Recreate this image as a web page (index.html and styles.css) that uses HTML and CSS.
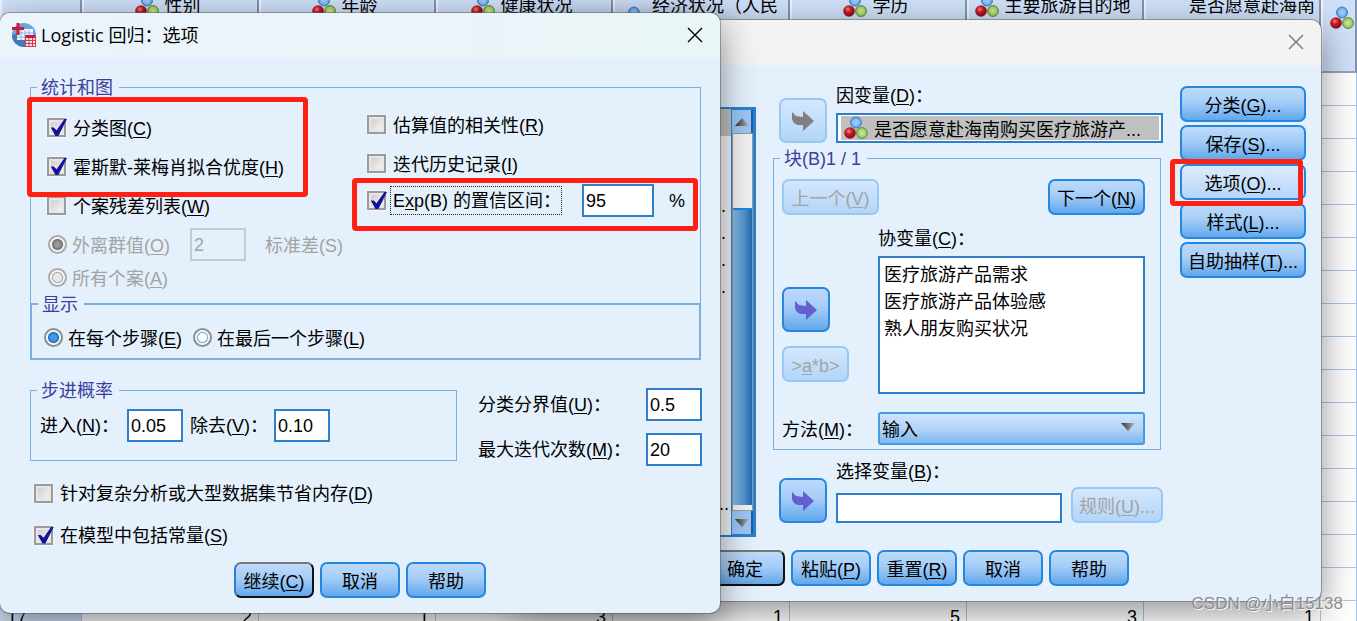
FILE: index.html
```html
<!DOCTYPE html>
<html lang="zh-CN">
<head>
  <meta charset="UTF-8" />
  <meta name="viewport" content="width=device-width, initial-scale=1.0">
  <title>Logistic 回归：选项</title>
  <link rel="stylesheet" href="styles.css">
</head>
<body>

  <!-- Shared icons -->
  <svg class="sprite" aria-hidden="true">
    <defs>
      <radialGradient id="ballBlue"><stop offset="0" stop-color="#a9d3fb"/><stop offset="0.7" stop-color="#7db8f3"/><stop offset="1" stop-color="#3f7fc6"/></radialGradient>
      <radialGradient id="ballRed" cx="0.4" cy="0.35"><stop offset="0" stop-color="#f08a90"/><stop offset="0.5" stop-color="#cf1f2b"/><stop offset="1" stop-color="#98101c"/></radialGradient>
      <radialGradient id="ballGreen"><stop offset="0" stop-color="#cdeaa0"/><stop offset="0.7" stop-color="#a5d070"/><stop offset="1" stop-color="#6a9a3c"/></radialGradient>
      <linearGradient id="arrowGrey"><stop offset="0" stop-color="#333"/><stop offset="1" stop-color="#b5b5b5"/></linearGradient>
    </defs>
    <symbol id="nominal" viewBox="0 0 24 24">
      <circle cx="12" cy="6.5" r="5.5" fill="url(#ballBlue)" stroke="#4586cf"/>
      <circle cx="6" cy="17" r="5.8" fill="url(#ballRed)"/>
      <circle cx="18" cy="17" r="5.5" fill="url(#ballGreen)" stroke="#6e9c42"/>
    </symbol>
    <symbol id="move" viewBox="0 0 22 20">
      <path d="M0 1 L4 5 L11 6 V0 L22 10 L11 20 V14 H6 C2 13 0 10 0 7Z" fill="currentColor"/>
    </symbol>
    <symbol id="cross" viewBox="0 0 16 16">
      <path d="M1 1 L15 15 M15 1 L1 15" stroke="currentColor" stroke-width="1.4" fill="none"/>
    </symbol>
  </svg>

  <main class="desktop">

    <!-- Data sheet -->
    <table class="sheet">
      <colgroup>
        <col class="num"><col class="var"><col class="var"><col class="var"><col class="var"><col class="var"><col class="var"><col class="var"><col>
      </colgroup>
      <thead>
        <tr>
          <th></th>
          <th><span><svg><use href="#nominal"/></svg>性别</span></th>
          <th><span><svg><use href="#nominal"/></svg>年龄</span></th>
          <th><span><svg><use href="#nominal"/></svg>健康状况</span></th>
          <th><span class="tall"><svg><use href="#nominal"/></svg>经济状况（人民</span></th>
          <th><span><svg><use href="#nominal"/></svg>学历</span></th>
          <th><span><svg><use href="#nominal"/></svg>主要旅游目的地</span></th>
          <th><span class="right">是否愿意赴海南</span></th>
          <th><span class="tall"><svg><use href="#nominal"/></svg></span></th>
        </tr>
      </thead>
      <tbody>
        <tr><th>1</th><td colspan="7"></td><td></td></tr>
        <tr><th>2</th><td colspan="7"></td><td></td></tr>
        <tr><th>3</th><td colspan="7"></td><td></td></tr>
        <tr><th>4</th><td colspan="7"></td><td></td></tr>
        <tr><th>5</th><td colspan="7"></td><td></td></tr>
        <tr><th>6</th><td colspan="7"></td><td></td></tr>
        <tr><th>7</th><td colspan="7"></td><td></td></tr>
        <tr><th>8</th><td colspan="7"></td><td></td></tr>
        <tr><th>9</th><td colspan="7"></td><td></td></tr>
        <tr><th>10</th><td colspan="7"></td><td></td></tr>
        <tr><th>11</th><td colspan="7"></td><td></td></tr>
        <tr><th>12</th><td colspan="7"></td><td></td></tr>
        <tr><th>13</th><td colspan="7"></td><td></td></tr>
        <tr><th>14</th><td colspan="7"></td><td></td></tr>
        <tr><th>15</th><td colspan="7"></td><td></td></tr>
        <tr><th>16</th><td colspan="7"></td><td></td></tr>
        <tr><th>17</th><td>2</td><td>1</td><td>3</td><td>1</td><td>5</td><td>3</td><td>1</td><td></td></tr>
      </tbody>
    </table>

    <!-- Logistic regression dialog -->
    <section class="dialog main-dialog">
      <header class="titlebar">
        <button type="button" class="close" aria-label="关闭"><svg><use href="#cross"/></svg></button>
      </header>
      <div class="main-body">
        <div class="source-list">
          <ul class="source-items">
            <li class="selected"></li>
            <li></li>
            <li></li>
            <li>...</li>
            <li>...</li>
            <li>...</li>
            <li>...</li>
            <li class="last">...</li>
          </ul>
          <div class="scrollbar">
            <button type="button" aria-label="向上"><svg viewBox="0 0 14 8"><path d="M0 8 L7 0 L14 8Z" fill="url(#arrowGrey)"/></svg></button>
            <div class="track"><div class="thumb"></div></div>
            <button type="button" aria-label="向下"><svg viewBox="0 0 14 8"><path d="M0 0 L7 8 L14 0Z" fill="url(#arrowGrey)"/></svg></button>
          </div>
        </div>

        <div class="targets">
          <div class="target-row">
            <button type="button" class="btn move" disabled aria-label="移动到因变量"><svg><use href="#move"/></svg></button>
            <div class="field">
              <span>因变量(<u>D</u>)：</span>
              <div class="var-box"><div class="var-chip"><svg><use href="#nominal"/></svg><span>是否愿意赴海南购买医疗旅游产...</span></div></div>
            </div>
          </div>

          <fieldset class="block">
            <legend>块(B)1 / 1</legend>
            <div class="block-nav">
              <button type="button" class="btn" disabled>上一个(<u>V</u>)</button>
              <button type="button" class="btn">下一个(<u>N</u>)</button>
            </div>
            <div class="block-grid">
              <div class="block-moves">
                <button type="button" class="btn move" aria-label="移动到协变量"><svg><use href="#move"/></svg></button>
                <button type="button" class="btn product" disabled>&gt;<u>a</u>*b&gt;</button>
              </div>
              <div class="field">
                <span>协变量(<u>C</u>)：</span>
                <ul class="covariates">
                  <li>医疗旅游产品需求</li>
                  <li>医疗旅游产品体验感</li>
                  <li>熟人朋友购买状况</li>
                </ul>
              </div>
              <label for="method">方法(<u>M</u>)：</label>
              <div class="select">
                <select id="method"><option>输入</option></select>
                <svg viewBox="0 0 14 8"><path d="M0 0 L7 8 L14 0Z" fill="url(#arrowGrey)"/></svg>
              </div>
            </div>
          </fieldset>

          <div class="target-row selection">
            <button type="button" class="btn move" aria-label="移动到选择变量"><svg><use href="#move"/></svg></button>
            <div class="field">
              <label for="selVar">选择变量(<u>B</u>)：</label>
              <input type="text" id="selVar">
            </div>
            <button type="button" class="btn rule" disabled>规则(<u>U</u>)...</button>
          </div>
        </div>

        <div class="side-buttons">
          <button type="button" class="btn">分类(<u>G</u>)...</button>
          <button type="button" class="btn">保存(<u>S</u>)...</button>
          <button type="button" class="btn active">选项(<u>O</u>)...</button>
          <button type="button" class="btn">样式(<u>L</u>)...</button>
          <button type="button" class="btn">自助抽样(<u>T</u>)...</button>
        </div>
      </div>
      <footer class="actions">
        <button type="button" class="btn default">确定</button>
        <button type="button" class="btn">粘贴(<u>P</u>)</button>
        <button type="button" class="btn">重置(<u>R</u>)</button>
        <button type="button" class="btn">取消</button>
        <button type="button" class="btn">帮助</button>
      </footer>
    </section>

    <!-- Options dialog -->
    <section class="dialog options-dialog">
      <header class="titlebar">
        <svg class="app-icon" viewBox="0 0 24 24">
          <circle cx="12" cy="12" r="12" fill="#6fa6d8"/>
          <path d="M0 12 A12 12 0 0 0 13 24 V17 H5 V11Z" fill="#3d7cba"/>
          <path d="M5 6 H21 V17 H5Z" fill="#f1f7fc"/>
          <path d="M5 10 H21 M5 14 H21 M9 7 V17 M13 7 V17 M17 7 V17" stroke="#86b3dc" stroke-width="1"/>
          <path d="M6 0 V12 M0 5.5 H12" stroke="#c8193f" stroke-width="3"/>
          <path d="M13 12 H24 V24 H13Z" fill="#f8e4e8"/>
          <path d="M13 13.5 H24" stroke="#c8193f" stroke-width="3"/>
          <path d="M13.5 12 V24 M17 15 V24 M20.5 15 V24 M23.5 12 V24 M13 17.5 H24 M13 20.5 H24 M13 23.5 H24" stroke="#cf3a5a" stroke-width="1"/>
        </svg>
        <h1>Logistic 回归：选项</h1>
        <button type="button" class="close" aria-label="关闭"><svg><use href="#cross"/></svg></button>
      </header>

      <form class="options-body">
        <fieldset class="stats">
          <legend>统计和图</legend>
          <div class="stats-left">
            <div class="row"><input type="checkbox" id="plots" checked><label for="plots">分类图(<u>C</u>)</label></div>
            <div class="row"><input type="checkbox" id="hosmer" checked><label for="hosmer">霍斯默-莱梅肖拟合优度(<u>H</u>)</label></div>
            <div class="row"><input type="checkbox" id="residuals"><label for="residuals">个案残差列表(<u>W</u>)</label></div>
            <div class="row sub">
              <input type="radio" name="cases" id="outliers" checked disabled><label for="outliers">外离群值(<u>O</u>)</label>
              <input type="text" id="stdDev" class="num" value="2" disabled>
              <label for="stdDev">标准差(S)</label>
            </div>
            <div class="row sub short"><input type="radio" name="cases" id="allCases" disabled><label for="allCases">所有个案(<u>A</u>)</label></div>
          </div>
          <div class="stats-right">
            <div class="row"><input type="checkbox" id="corr"><label for="corr">估算值的相关性(<u>R</u>)</label></div>
            <div class="row"><input type="checkbox" id="history"><label for="history">迭代历史记录(<u>I</u>)</label></div>
            <div class="row interval">
              <input type="checkbox" id="ci" checked><label for="ci" class="focused">E<u>x</u>p(B) 的置信区间：</label>
              <input type="text" class="num" value="95" aria-label="置信区间">
              <span>%</span>
            </div>
          </div>
        </fieldset>

        <fieldset class="display">
          <legend>显示</legend>
          <input type="radio" name="display" id="eachStep" checked><label for="eachStep">在每个步骤(<u>E</u>)</label>
          <input type="radio" name="display" id="lastStep"><label for="lastStep">在最后一个步骤(<u>L</u>)</label>
        </fieldset>

        <div class="limits">
          <fieldset class="probability">
            <legend>步进概率</legend>
            <label for="entry">进入(<u>N</u>)：</label>
            <input type="text" id="entry" class="num" value="0.05">
            <label for="removal">除去(<u>V</u>)：</label>
            <input type="text" id="removal" class="num" value="0.10">
          </fieldset>
          <div class="cutoffs">
            <label for="cutoff">分类分界值(<u>U</u>)：</label>
            <input type="text" id="cutoff" class="num" value="0.5">
            <label for="maxIter">最大迭代次数(<u>M</u>)：</label>
            <input type="text" id="maxIter" class="num" value="20">
          </div>
        </div>

        <div class="extras">
          <div class="row"><input type="checkbox" id="memory"><label for="memory">针对复杂分析或大型数据集节省内存(<u>D</u>)</label></div>
          <div class="row"><input type="checkbox" id="constant" checked><label for="constant">在模型中包括常量(<u>S</u>)</label></div>
        </div>
      </form>

      <footer class="actions">
        <button type="button" class="btn default">继续(<u>C</u>)</button>
        <button type="button" class="btn">取消</button>
        <button type="button" class="btn">帮助</button>
      </footer>
      <div class="mark mark-plots"></div>
      <div class="mark mark-interval"></div>
    </section>

    <div class="mark mark-options"></div>
    <p class="watermark">CSDN @小白15138</p>
  </main>

</body>
</html>
```
FILE: styles.css
```css
:root {
  --panel: #e4f0fc;
  --line: #7caede;
  --field-border: #2f7ecb;
  --btn-border: #2487e0;
  --legend: #3b3f9e;
  --muted: #a3a3a3;
  --mark: #ff2013;
}

* {
  box-sizing: border-box;
  margin: 0;
  padding: 0;
}

body,
button,
input,
select {
  font-family: "Liberation Sans", "Noto Sans CJK SC", sans-serif;
  font-size: 18px;
  line-height: 20px;
  color: #000;
}

u {
  text-underline-offset: 2px;
}

ul {
  list-style: none;
}

.sprite {
  display: block;
  width: 0;
  height: 0;
}

.desktop {
  position: relative;
  height: 100vh;
  overflow: hidden;
  background: #fff;
}

/* Data sheet */
.sheet {
  width: 100%;
  margin-top: -10px;
  table-layout: fixed;
  border-collapse: separate;
  border-spacing: 0;
}

.sheet .num {
  width: 82px;
}

.sheet .var {
  width: 177px;
}

.sheet thead th {
  height: 83px;
  overflow: hidden;
  vertical-align: top;
  font-weight: 400;
  white-space: nowrap;
  background: #cfe0f8;
  border-right: 2px solid #8394ae;
  border-left: 2px solid #eef4fd;
  border-bottom: 2px solid #8fa6c2;
}

.sheet thead span {
  display: flex;
  align-items: center;
  justify-content: center;
  gap: 6px;
  height: 32px;
  padding-right: 6px;
}

.sheet thead svg {
  flex: none;
  width: 24px;
  height: 24px;
}

.sheet thead .tall {
  justify-content: flex-start;
  padding-left: 7px;
}

.sheet thead .tall svg {
  margin-top: 24px;
}

.sheet thead .right {
  justify-content: flex-end;
  padding-right: 4px;
}

.sheet tbody th,
.sheet tbody td {
  height: 33px;
  padding: 0 6px;
  text-align: right;
  border-right: 1px solid #a9c8e8;
  border-bottom: 1px solid #a9c8e8;
}

.sheet tbody th {
  padding-left: 7px;
  text-align: left;
  font-weight: 400;
  background: #cfe0f8;
}

/* Dialog frame */
.dialog {
  position: absolute;
  background: var(--panel);
  border-radius: 10px;
  box-shadow: 0 0 0 1px rgba(90, 90, 90, 0.5), 0 10px 36px rgba(0, 0, 0, 0.45);
}

.titlebar {
  display: flex;
  align-items: center;
  height: 45px;
  padding: 0 17px 2px 12px;
  border-radius: 10px 10px 0 0;
}

.titlebar h1 {
  margin-left: 5px;
  font-family: "Open Sans", "Noto Sans CJK SC", sans-serif;
  font-size: 18px;
  font-weight: 400;
}

.close {
  width: 16px;
  height: 16px;
  margin-left: auto;
  background: none;
  border: none;
}

.close svg {
  display: block;
  width: 16px;
  height: 16px;
}

.app-icon {
  width: 24px;
  height: 24px;
}

.main-dialog {
  left: 513px;
  top: 20px;
  width: 808px;
}

.main-dialog .titlebar {
  background: #f3f3f3;
}

.main-dialog .close {
  color: #777;
}

.options-dialog {
  left: 0;
  top: 13px;
  width: 720px;
}

.options-dialog .titlebar {
  background: linear-gradient(90deg, #ebf3fb, #eaf5f7);
}

/* Buttons */
.btn {
  height: 36px;
  padding-top: 3px;
  white-space: nowrap;
  background: linear-gradient(#bddafb, #a5cdf7 45%, #62a7ec);
  border: 2px solid var(--btn-border);
  border-radius: 7px;
}

.btn.active {
  background: linear-gradient(#dcebfc, #b4d6f9);
}

.btn.default {
  border-color: #777 #111 #111 #2f7ecb;
}

.btn:disabled {
  color: var(--muted);
  background: linear-gradient(#d5e7fc, #b2d5f8);
  border-color: #98c8f4;
}

.btn.move {
  display: flex;
  flex: none;
  align-items: center;
  justify-content: center;
  width: 48px;
  height: 45px;
  padding-top: 0;
  color: #6560cf;
}

.btn.move:disabled {
  color: #808080;
}

.btn.move svg {
  width: 22px;
  height: 20px;
}

.actions {
  display: flex;
  justify-content: center;
  gap: 6px;
  padding-bottom: 15px;
}

.actions .btn {
  width: 80px;
}

/* Form controls */
fieldset {
  min-width: 0;
  border: 1px solid var(--line);
}

legend {
  margin-left: 6px;
  padding: 0 6px 0 4px;
  color: var(--legend);
}

input[type="text"] {
  height: 33px;
  padding: 2px 2px 0;
  background: #fff;
  border: 2px solid var(--field-border);
}

input.num {
  width: 56px;
}

input[type="text"]:disabled {
  color: var(--muted);
  background: var(--panel);
  border-color: #c6cace;
}

input:disabled + label,
input:disabled ~ label {
  color: var(--muted);
}

input[type="checkbox"],
input[type="radio"] {
  flex: none;
  appearance: none;
  width: 19px;
  height: 19px;
}

input[type="checkbox"] {
  background: linear-gradient(135deg, #c9c9c9, #fafafa);
  border: 2px solid #9b9b9b;
  box-shadow: inset 0 0 0 2px #e6e6e6, 0 0 0 1px #f3f5f7;
}

input[type="checkbox"]:checked::before {
  content: "";
  display: block;
  width: 18px;
  height: 17px;
  margin-top: -1px;
  background: #14129a;
  clip-path: polygon(10% 50%, 26% 50%, 42% 66%, 86% 0, 100% 0, 52% 100%, 36% 100%);
}

input[type="radio"] {
  background: radial-gradient(circle, #fff 0 4px, #6caee8 5px, #eee 6px);
  border: 2px solid #8a8f94;
  border-radius: 50%;
  box-shadow: inset 0 0 0 1px #fff;
}

input[type="radio"]:checked {
  background: radial-gradient(circle, #4298e4 0 3px, #1d6fc2 5px, #eee 6px);
}

input[type="radio"]:disabled {
  background: radial-gradient(circle, #e8e8e8 0 4px, #aaa 5px, #eee 6px);
  border-color: #aaa;
}

input[type="radio"]:checked:disabled {
  background: radial-gradient(circle, #999 0 2px, #6f7478 5px, #eee 6px);
}

.row {
  display: flex;
  align-items: center;
  gap: 7px;
  height: 39px;
  white-space: nowrap;
}

.row label {
  padding-top: 2px;
}

.field {
  display: flex;
  flex-direction: column;
  gap: 7px;
}

/* Main dialog content */
.main-body {
  display: grid;
  grid-template-columns: 1fr 390px 126px;
  gap: 17px;
  padding: 21px 15px 13px 16px;
}

.source-list {
  display: flex;
  margin-top: 21px;
  background: #f4f4f4;
  border: 2px solid var(--field-border);
}

.source-items {
  display: flex;
  flex: 1;
  flex-direction: column;
}

.source-items li {
  height: 27px;
  padding-top: 6px;
  text-align: right;
}

.source-items .selected {
  background: #c0c0c0;
}

.source-items .last {
  height: 41px;
  margin-top: auto;
  padding: 0 2px 0 0;
}

.source-items li:not(.last) {
  padding-right: 5px;
}

.scrollbar {
  display: flex;
  flex-direction: column;
  width: 23px;
  border: 1px solid #1c86ea;
}

.scrollbar button {
  height: 23px;
  background: #9cc6f4;
  border: none;
  border-right: 2px solid #225c99;
}

.scrollbar svg {
  display: block;
  width: 14px;
  height: 8px;
  margin: 0 auto;
}

.track {
  flex: 1;
  padding: 74px 0 5px;
  background: #f2f2f2;
  border: 1px solid #999;
}

.thumb {
  height: 100%;
  background: linear-gradient(90deg, #8dbbe2, #4f92cf 60%, #2466a6);
  border-top: 2px solid #1c86ea;
}

.targets {
  padding-bottom: 14px;
}

.target-row {
  display: flex;
  align-items: flex-end;
  gap: 9px;
  padding-left: 6px;
}

.target-row .field {
  flex: 1;
}

.var-box {
  height: 30px;
  padding: 1px 2px 1px 3px;
  background: #fff;
  border: 2px solid var(--field-border);
}

.var-chip {
  display: flex;
  align-items: center;
  gap: 6px;
  height: 24px;
  padding-left: 3px;
  white-space: nowrap;
  background: #c0c0c0;
}

.var-chip span {
  padding-top: 4px;
}

.var-chip svg {
  flex: none;
  width: 24px;
  height: 24px;
}

.block {
  width: 388px;
  margin-top: 5px;
  padding: 10px 15px 4px 8px;
}

.block legend {
  margin-left: -2px;
  padding-top: 1px;
}

.block-nav {
  display: flex;
  justify-content: space-between;
  margin-bottom: 14px;
}

.block-nav .btn {
  width: 97px;
}

.block-grid {
  display: grid;
  grid-template-columns: 96px 1fr;
  row-gap: 18px;
  align-items: center;
}

.block-grid label {
  padding-top: 3px;
}

.block-moves {
  display: flex;
  flex-direction: column;
  gap: 14px;
  align-self: end;
  padding-bottom: 12px;
}

.product {
  width: 67px;
}

.covariates {
  min-height: 138px;
  padding: 4px;
  background: #fff;
  border: 2px solid var(--field-border);
}

.covariates li {
  line-height: 27px;
}

.select {
  position: relative;
}

.select select {
  display: block;
  width: 100%;
  height: 33px;
  padding: 3px 0 0 2px;
  appearance: none;
  background: linear-gradient(#cfe3fc, #b4d4f8 50%, #7db8ef);
  border: 2px solid #439be9;
  border-radius: 3px;
}

.select svg {
  position: absolute;
  top: 11px;
  right: 10px;
  width: 14px;
  height: 8px;
}

.selection {
  margin-top: 12px;
}

.selection .field {
  gap: 11px;
}

.selection input {
  width: 100%;
  height: 30px;
}

.rule {
  width: 92px;
}

.side-buttons {
  display: flex;
  flex-direction: column;
  gap: 3px;
}

/* Options dialog content */
.options-body {
  padding: 18px 18px 6px 30px;
}

.options-body fieldset {
  margin-right: 1px;
}

.options-body legend {
  padding-top: 2px;
}

.stats {
  display: grid;
  grid-template-columns: 320px 1fr;
  padding: 7px 0 12px 16px;
  border-bottom: none;
}

.stats legend {
  margin-left: -10px;
}

.stats-left {
  padding-top: 3px;
}

.stats .sub {
  gap: 5px;
  padding-left: 1px;
}

.stats .short {
  height: 27px;
}

.stats .sub .num {
  margin: 0 14px 0 15px;
}

.stats .interval {
  height: 35px;
}

.interval .num {
  width: 72px;
  margin: 0 8px 0 16px;
}

.row .focused {
  width: 170px;
  padding: 4px 0 3px 2px;
  margin: 0 -2px;
  outline: 1px dotted #222;
}

.display {
  display: flex;
  align-items: center;
  gap: 5px;
  margin-top: -10px;
  padding: 11px 12px 9px;
  border-width: 2px;
}

.display legend {
  margin-left: -6px;
}

.display label {
  padding-top: 3px;
}

.display label + input {
  margin-left: 6px;
}

.limits {
  display: flex;
  align-items: flex-start;
  gap: 20px;
  margin-top: 19px;
}

.probability {
  display: grid;
  grid-template-columns: 87px 63px 84px 56px;
  flex: none;
  width: 427px;
  padding: 8px 9px 18px;
  align-items: center;
}

.probability legend {
  margin-left: -3px;
}

.cutoffs {
  display: grid;
  flex: 1;
  grid-template-columns: 1fr 56px;
  row-gap: 12px;
  align-items: center;
  padding-top: 9px;
}

.extras {
  padding: 6px 0 0 4px;
}

.extras .row {
  height: 42px;
}

/* Red marks over the dialogs */
.mark {
  position: absolute;
  border: 5px solid var(--mark);
  border-radius: 4px;
  pointer-events: none;
}

.mark-plots {
  left: 27px;
  top: 84px;
  width: 281px;
  height: 100px;
}

.mark-interval {
  left: 352px;
  top: 165px;
  width: 346px;
  height: 53px;
}

.mark-options {
  left: 1170px;
  top: 159px;
  width: 133px;
  height: 47px;
}

.watermark {
  position: absolute;
  right: 14px;
  bottom: 7px;
  font-size: 17px;
  color: #8c8c8c;
  text-shadow: 1px 1px 1px #fff;
}
```
